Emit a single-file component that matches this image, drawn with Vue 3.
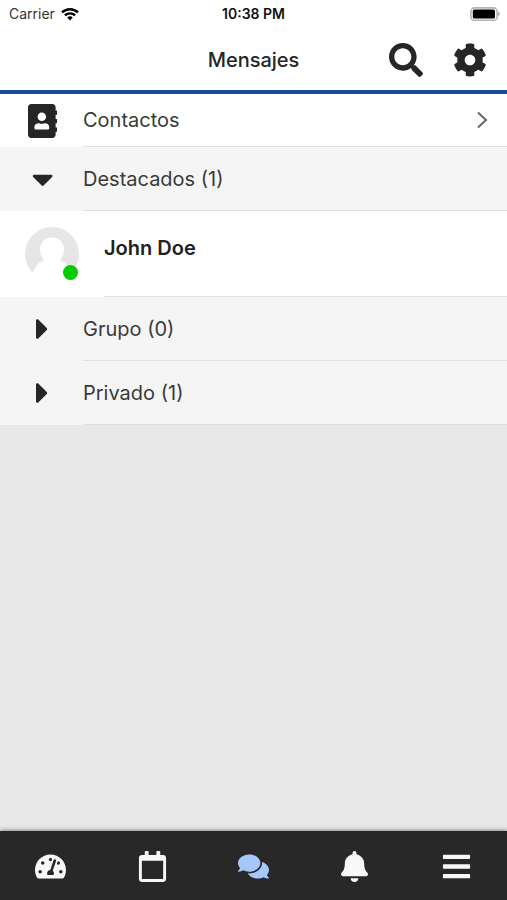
<template>
  <div class="app">
    <div class="status-bar">
      <div class="carrier">
        <span>Carrier</span>
        <svg class="wifi" viewBox="0 0 18 14" aria-hidden="true">
          <path d="M1 5.4a11.6 11.6 0 0 1 16 0" />
          <path d="M3.9 8.4a7.4 7.4 0 0 1 10.2 0" />
          <path class="wifi-dot" d="M9 13.4l-2.8-2.8a4 4 0 0 1 5.6 0z" />
        </svg>
      </div>
      <div class="clock">10:38 PM</div>
      <svg class="battery" viewBox="0 0 30 14" aria-hidden="true">
        <rect class="battery-shell" x="0.9" y="0.9" width="26.2" height="12.4" rx="3.6" />
        <rect x="2.8" y="2.6" width="22.2" height="9" rx="1.6" />
        <path class="battery-cap" d="M28 4.6c2.4 1 2.4 3.8 0 4.8z" />
      </svg>
    </div>

    <header class="header">
      <h1>Mensajes</h1>
      <div class="actions">
        <button type="button" aria-label="Buscar">
          <svg viewBox="0 0 512 512"><path :d="icons.search" /></svg>
        </button>
        <button type="button" aria-label="Ajustes">
          <svg viewBox="0 0 512 512"><path :d="icons.cog" /></svg>
        </button>
      </div>
    </header>

    <main class="content">
      <a class="row contacts" href="#contactos">
        <span class="row-icon"><svg viewBox="0 0 448 512"><path :d="icons.addressBook" /></svg></span>
        <span class="row-label">
          Contactos
          <svg class="chevron" viewBox="0 0 12 18"><path d="M2 1.5L10 9l-8 7.5" /></svg>
        </span>
      </a>

      <section v-for="group in groups" :key="group.id">
        <button type="button" class="row group" :aria-expanded="group.open" @click="group.open = !group.open">
          <span class="row-icon">
            <svg v-if="group.open" viewBox="0 0 320 512"><path :d="icons.caretDown" /></svg>
            <svg v-else viewBox="0 0 192 512"><path :d="icons.caretRight" /></svg>
          </span>
          <span class="row-label">{{ group.name }} ({{ group.count }})</span>
        </button>
        <template v-if="group.open">
          <a v-for="chat in group.chats" :key="chat" class="chat" href="#chat">
            <span class="avatar">
              <svg viewBox="0 0 54 54">
                <circle cx="27" cy="27" r="27" fill="#e6e6e6" />
                <path fill="#fff" d="M27 10.5c-7.2 0-12 5-12 11.5 0 5 1.8 8.500 4.300 11C13 35.500 10.500 39.500 7.500 46L0 54h54v-9l-7.500 1C43.500 39.500 41 35.500 34.700 33c2.500-2.500 4.300-6 4.300-11 0-6.500-4.800-11.500-12-11.500z" />
              </svg>
              <span class="online"></span>
            </span>
            <span class="chat-name">{{ chat }}</span>
          </a>
        </template>
      </section>
    </main>

    <nav class="tabs">
      <a v-for="tab in tabs" :key="tab.label" href="#" :aria-label="tab.label" :class="{ active: tab.active }">
        <svg :viewBox="`0 0 ${tab.width} 512`"><path :d="icons[tab.icon]" /></svg>
      </a>
    </nav>
  </div>
</template>

<script setup>
import { reactive } from 'vue'

const groups = reactive([
  { id: 'starred', name: 'Destacados', count: 1, open: true, chats: ['John Doe'] },
  { id: 'group', name: 'Grupo', count: 0, open: false, chats: [] },
  { id: 'private', name: 'Privado', count: 1, open: false, chats: [] },
])

const tabs = [
  { label: 'Tablero', icon: 'gauge', width: 576 },
  { label: 'Calendario', icon: 'calendar', width: 448 },
  { label: 'Mensajes', icon: 'comments', width: 576, active: true },
  { label: 'Notificaciones', icon: 'bell', width: 448 },
  { label: 'Más', icon: 'bars', width: 448 },
]

const icons = {
  search: 'M505 442.7L405.3 343c-4.5-4.5-10.6-7-17-7H372c27.6-35.3 44-79.7 44-128C416 93.1 322.9 0 208 0S0 93.1 0 208s93.1 208 208 208c48.3 0 92.7-16.4 128-44v16.3c0 6.4 2.5 12.5 7 17l99.7 99.7c9.4 9.4 24.6 9.4 33.9 0l28.3-28.3c9.4-9.4 9.4-24.6.1-34zM208 336c-70.7 0-128-57.2-128-128 0-70.7 57.2-128 128-128 70.7 0 128 57.2 128 128 0 70.7-57.2 128-128 128z',
  cog: 'M487.4 315.7l-42.6-24.6c4.3-23.2 4.3-47 0-70.2l42.6-24.6c4.9-2.8 7.1-8.6 5.5-14-11.1-35.6-30-67.8-54.7-94.6-3.8-4.1-10-5.1-14.8-2.3L380.8 110c-17.9-15.4-38.5-27.3-60.8-35.1V25.8c0-5.6-3.9-10.5-9.4-11.7-36.7-8.2-74.3-7.8-109.2 0-5.5 1.2-9.4 6.1-9.4 11.7V75c-22.2 7.9-42.8 19.8-60.8 35.1L88.7 85.5c-4.9-2.8-11-1.9-14.8 2.3-24.7 26.7-43.6 58.9-54.7 94.6-1.7 5.4.6 11.2 5.5 14L67.3 221c-4.3 23.2-4.3 47 0 70.2l-42.6 24.6c-4.9 2.8-7.1 8.6-5.5 14 11.1 35.6 30 67.8 54.7 94.6 3.8 4.1 10 5.1 14.8 2.3l42.6-24.6c17.9 15.4 38.5 27.3 60.8 35.1v49.2c0 5.6 3.9 10.5 9.4 11.7 36.7 8.2 74.3 7.8 109.2 0 5.5-1.2 9.4-6.1 9.4-11.7v-49.2c22.2-7.9 42.8-19.8 60.8-35.1l42.6 24.6c4.9 2.8 11 1.9 14.8-2.3 24.7-26.7 43.6-58.9 54.7-94.6 1.5-5.5-.7-11.3-5.6-14.1zM256 336c-44.1 0-80-35.9-80-80s35.9-80 80-80 80 35.9 80 80-35.9 80-80 80z',
  addressBook: 'M436 160c6.6 0 12-5.4 12-12v-40c0-6.6-5.4-12-12-12h-20V48c0-26.5-21.5-48-48-48H48C21.5 0 0 21.5 0 48v416c0 26.5 21.5 48 48 48h320c26.5 0 48-21.5 48-48v-48h20c6.6 0 12-5.4 12-12v-40c0-6.6-5.4-12-12-12h-20v-64h20c6.6 0 12-5.4 12-12v-40c0-6.6-5.4-12-12-12h-20v-64h20zm-228-32c35.3 0 64 28.7 64 64s-28.7 64-64 64-64-28.7-64-64 28.7-64 64-64zm112 236.8c0 10.6-10 19.2-22.4 19.2H118.4C106 384 96 375.4 96 364.8v-19.2c0-31.8 30.1-57.6 67.2-57.6h5c12.3 5.1 25.7 8 39.8 8s27.6-2.9 39.8-8h5c37.1 0 67.2 25.8 67.2 57.6v19.2z',
  caretDown: 'M31.3 192h257.3c17.8 0 26.7 21.5 14.1 34.1L174.1 354.8c-7.8 7.8-20.5 7.8-28.3 0L17.2 226.1C4.6 213.5 13.5 192 31.3 192z',
  caretRight: 'M0 384.7V127.3c0-17.8 21.5-26.7 34.1-14.1l128.7 128.7c7.8 7.8 7.8 20.5 0 28.3L34.1 398.8C21.5 411.4 0 402.5 0 384.7z',
  gauge: 'M288 32C128.94 32 0 160.94 0 320c0 52.8 14.25 102.26 39.06 144.8 5.61 9.62 16.3 15.2 27.44 15.2h443c11.14 0 21.83-5.58 27.44-15.2C561.75 422.26 576 372.8 576 320c0-159.06-128.94-288-288-288zm0 64c14.71 0 26.58 10.13 30.32 23.65-1.11 2.26-2.64 4.23-3.45 6.67l-9.22 27.67c-5.13 3.49-10.97 6.01-17.64 6.01-17.67 0-32-14.33-32-32S270.33 96 288 96zM96 384c-17.67 0-32-14.33-32-32s14.33-32 32-32 32 14.33 32 32-14.33 32-32 32zm48-160c-17.67 0-32-14.33-32-32s14.33-32 32-32 32 14.33 32 32-14.33 32-32 32zm246.77-72.41l-61.33 184C343.13 347.33 352 364.54 352 384c0 11.72-3.38 22.55-8.88 32H232.88c-5.5-9.45-8.88-20.28-8.88-32 0-33.94 26.5-61.43 59.9-63.59l61.34-184.01c4.17-12.56 17.73-19.45 30.36-15.17 12.57 4.19 19.35 17.79 15.17 30.36zm14.66 57.2l15.52-46.55c3.47-1.29 7.13-2.23 11.05-2.23 17.67 0 32 14.33 32 32s-14.33 32-32 32c-11.38-.01-20.89-6.28-26.57-15.22zM480 384c-17.67 0-32-14.33-32-32s14.33-32 32-32 32 14.33 32 32-14.33 32-32 32z',
  calendar: 'M400 64h-48V12c0-6.6-5.4-12-12-12h-40c-6.6 0-12 5.4-12 12v52H160V12c0-6.6-5.4-12-12-12h-40c-6.6 0-12 5.4-12 12v52H48C21.5 64 0 85.5 0 112v352c0 26.5 21.5 48 48 48h352c26.5 0 48-21.5 48-48V112c0-26.5-21.5-48-48-48zm-6 400H54c-3.3 0-6-2.7-6-6V160h352v298c0 3.3-2.7 6-6 6z',
  comments: 'M416 192c0-88.4-93.1-160-208-160S0 103.6 0 192c0 34.3 14.1 65.9 38 92-13.4 30.2-35.5 54.2-35.8 54.5-2.2 2.3-2.8 5.7-1.5 8.7S4.8 352 8 352c36.6 0 66.9-12.3 88.7-25 32.2 15.7 70.3 25 111.3 25 114.9 0 208-71.6 208-160zm122 220c23.9-26 38-57.7 38-92 0-66.9-53.5-124.2-129.3-148.1.9 6.6 1.3 13.3 1.3 20.1 0 105.9-107.7 192-240 192-10.8 0-21.3-.8-31.7-1.9C207.8 439.6 281.8 480 368 480c41 0 79.1-9.2 111.3-25 21.8 12.7 52.1 25 88.7 25 3.2 0 6.1-1.9 7.3-4.8 1.3-2.9.7-6.3-1.5-8.7-.3-.3-22.4-24.2-35.8-54.5z',
  bell: 'M224 512c35.32 0 63.97-28.65 63.97-64H160.03c0 35.35 28.65 64 63.97 64zm215.39-149.71c-19.32-20.76-55.47-51.99-55.47-154.29 0-77.7-54.48-139.9-127.94-155.16V32c0-17.67-14.32-32-31.98-32s-31.98 14.33-31.98 32v20.84C118.56 68.1 64.08 130.3 64.08 208c0 102.3-36.15 133.53-55.47 154.29-6 6.45-8.66 14.16-8.61 21.71.11 16.4 12.98 32 32.1 32h383.8c19.12 0 32-15.6 32.1-32 .05-7.55-2.61-15.27-8.61-21.71z',
  bars: 'M16 132h416c8.8 0 16-7.2 16-16V76c0-8.8-7.2-16-16-16H16C7.2 60 0 67.2 0 76v40c0 8.8 7.2 16 16 16zm0 160h416c8.8 0 16-7.2 16-16v-40c0-8.8-7.2-16-16-16H16c-8.8 0-16 7.2-16 16v40c0 8.8 7.2 16 16 16zm0 160h416c8.8 0 16-7.2 16-16v-40c0-8.8-7.2-16-16-16H16c-8.8 0-16 7.2-16 16v40c0 8.8 7.2 16 16 16z',
}
</script>

<style>
body { margin: 0; background: #e8e8e8; }
</style>

<style scoped>
.app { display: flex; flex-direction: column; min-height: 100vh; font-family: Inter, "Liberation Sans", sans-serif; font-size: 20px; line-height: 24px; color: #3a3a3a; }
button { padding: 0; border: none; background: none; font: inherit; color: inherit; text-align: left; cursor: pointer; }
a { color: inherit; text-decoration: none; }
svg { display: block; fill: currentColor; }

.status-bar { display: grid; grid-template-columns: 1fr auto 1fr; align-items: center; height: 28px; padding: 0 7px; background: #fff; font-size: 14px; line-height: 16px; color: #111; }
.carrier { display: flex; align-items: center; gap: 6px; padding-left: 2px; color: #333; }
.wifi { width: 18px; height: 14px; color: #000; fill: none; stroke: #000; stroke-width: 2.4; }
.wifi-dot { fill: #000; stroke: none; }
.clock { font-weight: 600; }
.battery { justify-self: end; width: 30px; height: 14px; fill: #000; }
.battery-shell { fill: #fff; stroke: #b4b4b4; stroke-width: 1.6; }
.battery-cap { fill: #b4b4b4; }

.header { display: grid; grid-template-columns: 1fr auto 1fr; align-items: center; height: 60px; padding: 2px 20px 0; background: #fff; border-bottom: 4px solid #164c93; color: #262626; }
.header h1 { grid-column: 2; margin: 0; font-size: 20px; font-weight: 500; }
.actions { display: flex; justify-content: flex-end; gap: 30px; }
.actions svg { width: 34px; height: 34px; }

.content { flex: 1; }
.row { display: flex; width: 100%; background: #f5f5f5; }
.row-icon { display: flex; flex: none; align-items: center; justify-content: center; box-sizing: border-box; width: 83px; padding-left: 2px; color: #262626; }
.row-icon svg { height: 34px; }
.row-label { display: flex; flex: 1; align-items: center; justify-content: space-between; height: 63px; padding-right: 19px; border-bottom: 1px solid #e0e0e0; }
.contacts { background: #fff; }
.contacts .row-label { height: 52px; }
.chevron { width: 12px; height: 18px; fill: none; stroke: #666; stroke-width: 2; }

.chat { display: flex; padding-left: 25px; background: #fff; }
.avatar { position: relative; flex: none; width: 54px; height: 54px; margin: 16px 25px 0 0; }
.online { position: absolute; right: 1px; bottom: 1px; width: 15px; height: 15px; border-radius: 50%; background: #0c0; }
.chat-name { flex: 1; height: 60px; padding-top: 25px; border-bottom: 1px solid #e0e0e0; font-weight: 600; color: #222; }

.tabs { position: sticky; bottom: 0; display: flex; box-sizing: border-box; height: 69px; padding-top: 2px; background: #282828; box-shadow: 0 -1px 4px rgba(0, 0, 0, .4); color: #f8f8f8; }
.tabs a { display: flex; flex: 1; align-items: center; justify-content: center; }
.tabs svg { width: 31px; height: 31px; }
.tabs .active { color: #a5c8fb; }
</style>
